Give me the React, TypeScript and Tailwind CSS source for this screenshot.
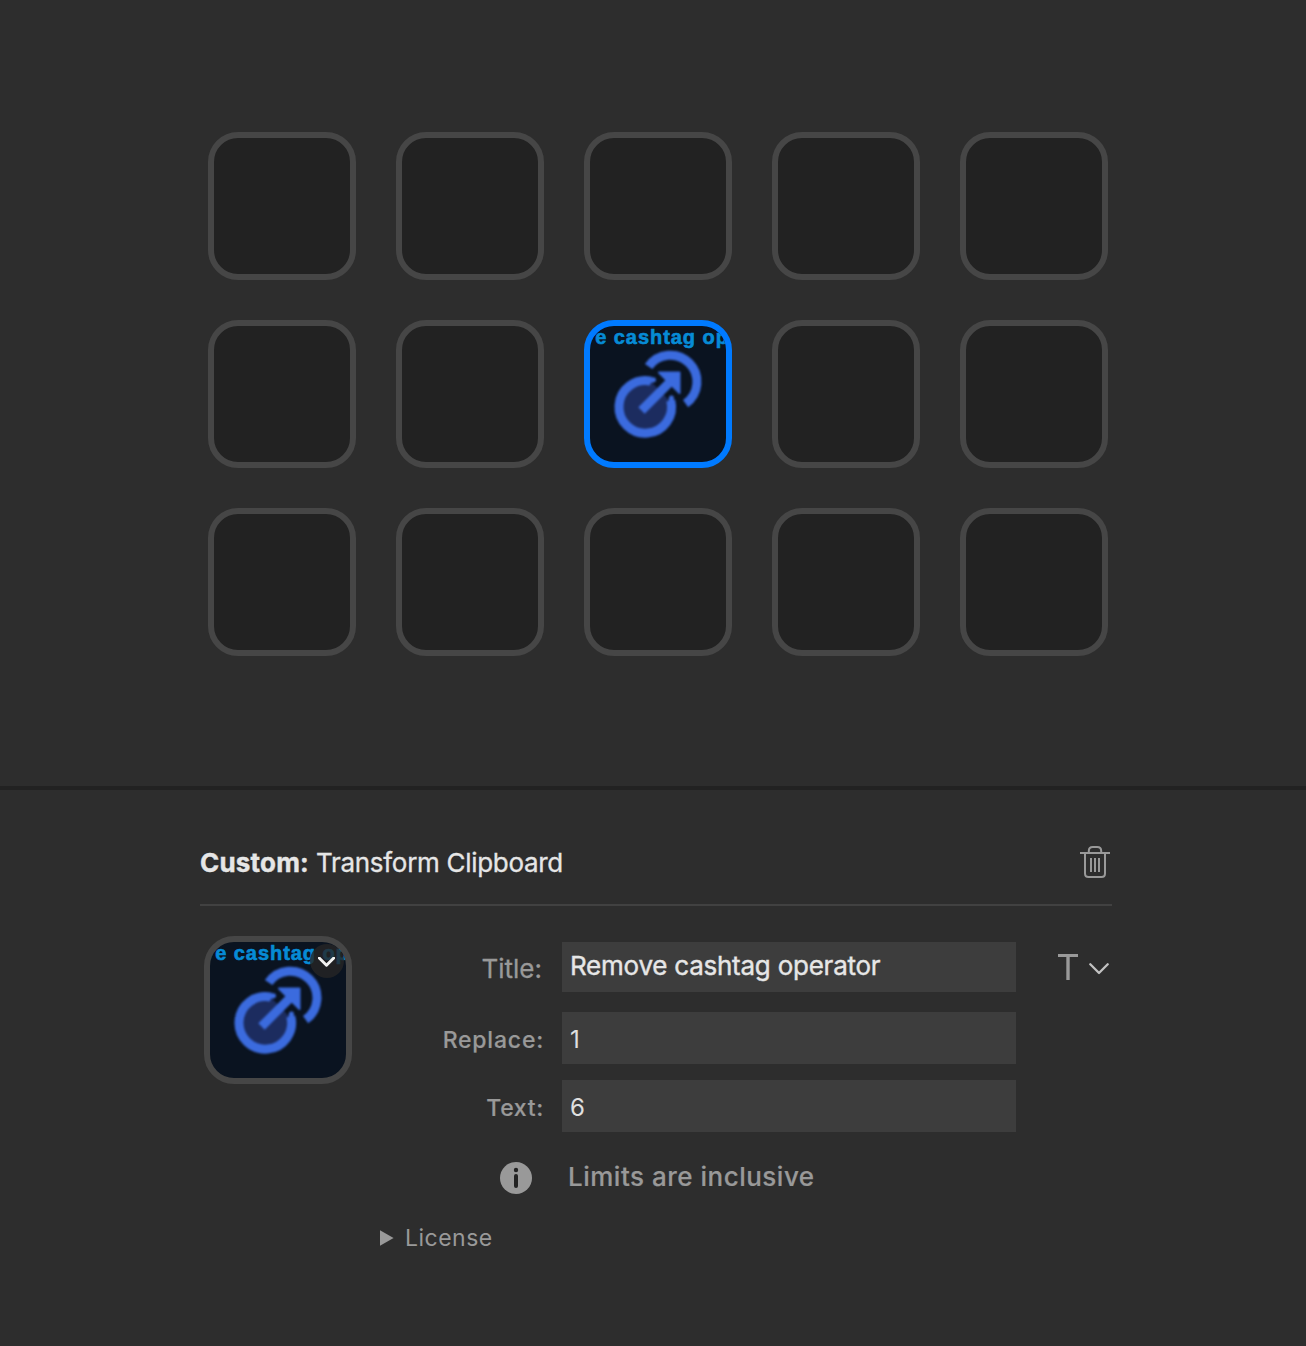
import React from 'react';

function LinkArt() {
  return (
    <>
      <svg viewBox="0 0 136 136" className="absolute inset-0 h-[136px] w-[136px] blur-[0.9px]" fill="none">
        <path d="M60 54.6A27 27 0 1 0 81.4 77L71.5 66Z" fill="#1c2c5f" />
        <path d="M61 55.2A26.3 26.3 0 1 0 80.8 74.5" stroke="#3b6bde" strokeWidth="9" />
        <path d="M59 54.8L63.5 53.8M81 76L81.4 72" stroke="#3b6bde" strokeWidth="5" strokeLinecap="round" />
        <path d="M58.6 40.5A26.6 26.6 0 1 1 95.6 77.6" stroke="#3b6bde" strokeWidth="9" />
        <path d="M51.5 84.5L83 53" stroke="#3b6bde" strokeWidth="9" />
        <path d="M69 46.5H89.5V67Z" fill="#3b6bde" stroke="#3b6bde" strokeWidth="2" strokeLinejoin="round" />
      </svg>
      <div className="absolute inset-x-0 top-0 flex h-6 justify-center">
        <span className="-ml-px shrink-0 whitespace-nowrap font-['Liberation_Sans',sans-serif] text-[20px] leading-[23px] font-bold tracking-[0.95px] text-[#068bd6] [-webkit-text-stroke:0.6px_#068bd6]">
          Remove cashtag operator
        </span>
      </div>
    </>
  );
}

function Key({ active = false }: { active?: boolean }) {
  return active ? (
    <div className="relative h-[148px] w-[148px] overflow-hidden rounded-[30px] border-6 border-[#007aff] bg-[#0a1320]">
      <LinkArt />
    </div>
  ) : (
    <div className="h-[148px] w-[148px] rounded-[30px] border-6 border-[#464646] bg-[#222222]" />
  );
}

function Chevron({ className }: { className: string }) {
  return (
    <svg viewBox="0 0 20 12" className={className} fill="none" stroke="currentColor" strokeLinecap="round" strokeLinejoin="round">
      <path d="M1.3 1.3L10 10L18.7 1.3" />
    </svg>
  );
}

export default function App() {
  return (
    <div className="h-[1346px] w-[1306px] overflow-hidden bg-[#2d2d2d] font-[Inter,sans-serif]">
      <div className="h-[786px] pt-[132px] pl-[208px]">
        <div className="grid w-[900px] grid-cols-5 gap-10">
          {Array.from({ length: 15 }, (_, i) => (
            <Key key={i} active={i === 7} />
          ))}
        </div>
      </div>
      <div className="h-1 bg-[#222222]" />
      <div className="ml-[200px] w-[912px]">
        <div className="flex h-[116px] items-start justify-between border-b-2 border-[#414141] pt-[53px]">
          <h1 className="text-[26px] leading-10 whitespace-nowrap text-[#e6e6e6]">
            <span className="inline-block w-[116px] font-bold tracking-[0.2px] [-webkit-text-stroke:0.4px_#e6e6e6]">Custom:</span>
            <span className="tracking-[-0.3px] [-webkit-text-stroke:0.3px_#e6e6e6]">Transform Clipboard</span>
          </h1>
          <svg viewBox="0 0 30 33" className="mt-[3px] mr-[2px] h-[33px] w-[30px]" fill="none" stroke="#999999" strokeWidth="2">
            <path d="M0 7H30" />
            <path d="M8.8 7V5Q8.8 1 12.8 1H17.2Q21.2 1 21.2 5V7" />
            <path d="M5 7V27.5Q5 31 8.5 31H21.5Q25 31 25 27.5V7" />
            <path d="M11 12V26M15 12V26M19 12V26" />
          </svg>
        </div>
        <div className="flex">
          <div className="mt-[30px] ml-1 h-[148px] w-[148px] shrink-0">
            <div className="relative h-[148px] w-[148px] overflow-hidden rounded-[30px] border-6 border-[#464646] bg-[#0a1320]">
              <LinkArt />
              <div className="absolute top-[2px] left-[100px] flex h-[34px] w-[34px] items-center justify-center rounded-full bg-[#262626]/80 text-[#f2f2f2]">
                <Chevron className="mt-px mr-px h-[10px] w-[17px] stroke-[3.4]" />
              </div>
            </div>
          </div>
          <div className="ml-7 w-[636px] pt-9">
            <div className="flex h-[50px]">
              <label className="w-[162px] text-right text-[26px] leading-[54px] text-[#999999] [-webkit-text-stroke:0.3px_#999999]">Title:</label>
              <div className="ml-5 w-[454px] bg-[#3d3d3d] pl-2 text-[26px] leading-12 tracking-[-0.24px] text-[#e6e6e6] [-webkit-text-stroke:0.4px_#e6e6e6]">
                Remove cashtag operator
              </div>
            </div>
            <div className="mt-5 flex h-[52px]">
              <label className="w-[164px] text-right text-[23px] leading-[56px] font-medium tracking-[0.8px] text-[#999999] [-webkit-text-stroke:0.2px_#999999]">Replace:</label>
              <div className="ml-[18px] w-[454px] bg-[#3d3d3d] pl-2 text-[24px] leading-[56px] text-[#e0e0e0]">1</div>
            </div>
            <div className="mt-4 flex h-[52px]">
              <label className="w-[164px] text-right text-[23px] leading-[56px] font-medium tracking-[0.7px] text-[#999999] [-webkit-text-stroke:0.2px_#999999]">Text:</label>
              <div className="ml-[18px] w-[454px] bg-[#3d3d3d] pl-2 text-[24px] leading-[56px] text-[#e0e0e0]">6</div>
            </div>
            <div className="mt-[30px] flex h-8 items-center">
              <svg viewBox="0 0 32 32" className="ml-[120px] h-8 w-8">
                <circle cx="16" cy="16" r="16" fill="#999999" />
                <circle cx="16" cy="8" r="2.2" fill="#222222" />
                <path d="M16 14V24" stroke="#222222" strokeWidth="4" strokeLinecap="round" />
              </svg>
              <span className="-mt-[2px] ml-9 text-[26px] leading-8 font-medium tracking-[0.5px] text-[#999999] [-webkit-text-stroke:0.2px_#999999]">Limits are inclusive</span>
            </div>
            <div className="mt-[28px] flex h-8 items-center">
              <svg viewBox="0 0 14 16" className="h-4 w-[14px]">
                <path d="M0 0.3L13.6 8L0 15.7Z" fill="#999999" />
              </svg>
              <span className="ml-[11px] text-[23px] leading-8 tracking-[0.5px] text-[#999999]">License</span>
            </div>
          </div>
          <div className="mt-9 ml-[42px] flex h-[50px] items-center text-[#999999]">
            <svg viewBox="0 0 20 26" className="h-[26px] w-5" fill="none" stroke="currentColor">
              <path d="M0 1.5H20" strokeWidth="3" />
              <path d="M10 2V26" strokeWidth="3.4" />
            </svg>
            <Chevron className="mt-[3px] ml-[11px] h-3 w-5 stroke-[2.3] text-[#c2c2c2]" />
          </div>
        </div>
      </div>
    </div>
  );
}
